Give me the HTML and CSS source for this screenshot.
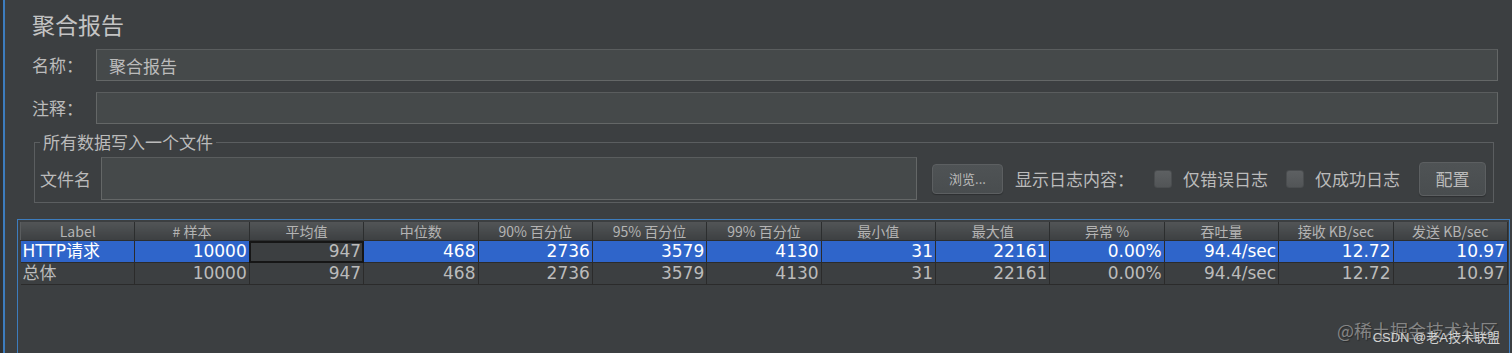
FILE: index.html
```html
<!DOCTYPE html>
<html>
  <head>
    <title>聚合报告</title>
    <meta name="viewport" content="width=device-width, initial-scale=1" />
    <link rel="stylesheet" href="styles.css">
  </head>
  <body>
    <div class="app">
      <h1 class="title">聚合报告</h1>

      <div class="form-row">
        <label class="form-label">名称：</label>
        <input class="text-field" type="text" value="聚合报告" />
      </div>
      <div class="form-row">
        <label class="form-label">注释：</label>
        <input class="text-field" type="text" value="" />
      </div>

      <fieldset class="file-box">
        <legend>所有数据写入一个文件</legend>
        <div class="file-row">
          <label class="file-label">文件名</label>
          <input class="text-field file-input" type="text" value="" />
          <button class="btn btn-browse">浏览...</button>
          <span class="log-label">显示日志内容：</span>
          <span class="check"></span>
          <span class="check-text">仅错误日志</span>
          <span class="check check-2"></span>
          <span class="check-text">仅成功日志</span>
          <button class="btn btn-config">配置</button>
        </div>
      </fieldset>

      <div class="table-pane">
        <table class="results">
          <thead>
            <tr>
              <th>Label</th>
              <th># 样本</th>
              <th>平均值</th>
              <th>中位数</th>
              <th>90% 百分位</th>
              <th>95% 百分位</th>
              <th>99% 百分位</th>
              <th>最小值</th>
              <th>最大值</th>
              <th>异常 %</th>
              <th>吞吐量</th>
              <th>接收 KB/sec</th>
              <th>发送 KB/sec</th>
            </tr>
          </thead>
          <tbody>
            <tr class="selected">
              <td class="name">HTTP请求</td>
              <td>10000</td>
              <td class="focused">947</td>
              <td>468</td>
              <td>2736</td>
              <td>3579</td>
              <td>4130</td>
              <td>31</td>
              <td>22161</td>
              <td>0.00%</td>
              <td>94.4/sec</td>
              <td>12.72</td>
              <td>10.97</td>
            </tr>
            <tr>
              <td class="name">总体</td>
              <td>10000</td>
              <td>947</td>
              <td>468</td>
              <td>2736</td>
              <td>3579</td>
              <td>4130</td>
              <td>31</td>
              <td>22161</td>
              <td>0.00%</td>
              <td>94.4/sec</td>
              <td>12.72</td>
              <td>10.97</td>
            </tr>
          </tbody>
        </table>
      </div>

      <div class="watermark">@稀土掘金技术社区</div>
      <div class="watermark-csdn">CSDN @老A技术联盟</div>
    </div>
  </body>
</html>
```

FILE: styles.css
```css
html,
body {
  margin: 0;
  padding: 0;
  height: 100%;
  overflow: hidden;
}

body {
  background: #2f3133;
  font-family: "Noto Sans CJK SC", "DejaVu Sans", sans-serif;
  color: #bbbbbb;
}

.app {
  position: relative;
  display: flex;
  flex-direction: column;
  margin-left: 3px;
  border-left: 2px solid #3d7cbd;
  background: #3c3f41;
  height: 100%;
  box-sizing: border-box;
  padding-top: 9px;
}

.title {
  margin: 0 0 10px 27px;
  font-size: 23px;
  line-height: 30px;
  font-weight: normal;
  color: #c4c4c4;
}

.form-row {
  display: flex;
  align-items: center;
  margin: 0 14px 0 27px;
}

.form-row + .form-row {
  margin-top: 11px;
}

.form-label {
  width: 64px;
  font-size: 17px;
  line-height: 20px;
}

.text-field {
  flex: 1;
  height: 32px;
  box-sizing: border-box;
  margin: 0;
  padding: 0 0 0 12px;
  background: #45494a;
  border: 1px solid #646767;
  border-top-color: #5a5d5e;
  color: #bbbbbb;
  font-family: "Noto Sans CJK SC", sans-serif;
  font-size: 17px;
  outline: none;
}

.file-box {
  margin: 8px 18px 16px 29px;
  padding: 5px 7px 2px 5px;
  border: 1px solid #5b5e60;
  min-width: 0;
}

.file-box legend {
  padding: 0 3px;
  font-size: 17px;
  line-height: 20px;
}

.file-row {
  display: flex;
  align-items: center;
}

.file-label {
  width: 61px;
  font-size: 17px;
  line-height: 20px;
}

.file-input {
  height: 43px;
}

.btn {
  box-sizing: border-box;
  margin: 0;
  padding: 0;
  background: linear-gradient(#4f5355, #494d4f);
  border: 1px solid #5c5f61;
  border-radius: 4px;
  color: #bbbbbb;
  font-family: "Noto Sans CJK SC", sans-serif;
  box-shadow: 0 1px 1px rgba(0, 0, 0, 0.25);
}

.btn-browse {
  width: 71px;
  height: 30px;
  margin-left: 15px;
  font-size: 13px;
}

.btn-config {
  width: 67px;
  height: 34px;
  margin-left: 19px;
  font-size: 17px;
}

.log-label {
  margin-left: 12px;
  font-size: 17px;
  line-height: 20px;
}

.check {
  width: 18px;
  height: 18px;
  box-sizing: border-box;
  margin-left: 20px;
  border: 1px solid #4a4d4f;
  border-radius: 3px;
  background: linear-gradient(#5d6062, #525557);
}

.check-2 {
  margin-left: 18px;
}

.check-text {
  margin-left: 11px;
  font-size: 17px;
  line-height: 20px;
}

.table-pane {
  flex: 1;
  min-height: 0;
  margin: 0 2px 0 12px;
  padding: 2px 0 0 2px;
  border: 1px solid #3d7cbd;
  border-bottom: none;
}

.results {
  width: 1488px;
  table-layout: fixed;
  border-collapse: collapse;
  font-family: "DejaVu Sans", "Noto Sans CJK SC", sans-serif;
}

.results th {
  height: 18px;
  padding: 0;
  font-family: "Noto Sans CJK SC", "DejaVu Sans", sans-serif;
  font-size: 14px;
  line-height: 18px;
  font-weight: normal;
  color: #b4b4b4;
  background: linear-gradient(#525557, #3d4042);
  border-right: 1px solid #2c2e2f;
  border-left: 1px solid #5a5d5f;
  border-bottom: 1px solid #2c2e2f;
  text-align: center;
  white-space: nowrap;
}

.results td {
  height: 21px;
  padding: 0 2px 0 0;
  font-size: 17px;
  line-height: 21px;
  color: #bbbbbb;
  background: #3c3f41;
  border-right: 1px solid #2b2b2b;
  border-bottom: 1px solid #2b2b2b;
  text-align: right;
  white-space: nowrap;
}

.results td.name {
  text-align: left;
  padding-left: 2px;
}

.results tr.selected td {
  background: #2f65ca;
  color: #ffffff;
}

.results tr.selected td.focused {
  background: #3c3f41;
  color: #bbbbbb;
  outline: 2px solid #161616;
  outline-offset: -2px;
}

.watermark {
  position: absolute;
  right: 14px;
  bottom: 12px;
  font-size: 18px;
  line-height: 22px;
  color: #858585;
  text-shadow: 1px 1px 1px rgba(0, 0, 0, 0.35);
}

.watermark-csdn {
  position: absolute;
  right: 12px;
  bottom: 8px;
  font-family: "Liberation Sans", "Noto Sans CJK SC", sans-serif;
  font-size: 13px;
  line-height: 15px;
  color: #d2d2d2;
}
```
